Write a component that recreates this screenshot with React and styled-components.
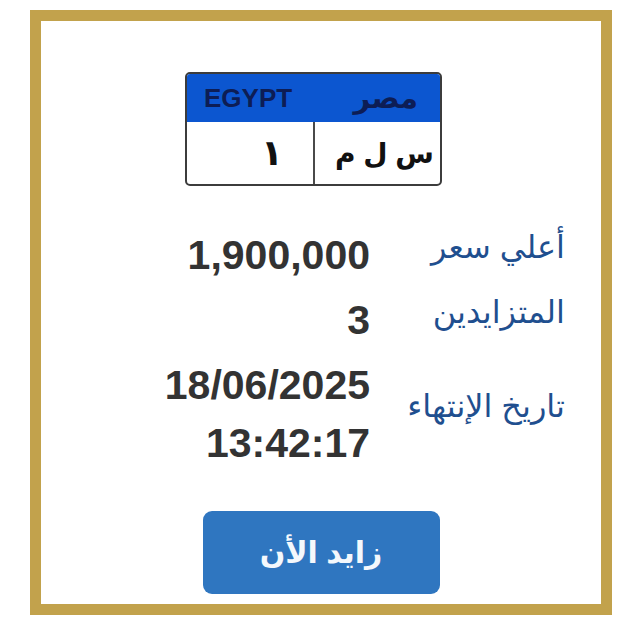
import React from 'react'
import styled, { createGlobalStyle } from 'styled-components'

const GlobalStyle = createGlobalStyle`
  body {
    margin: 0;
    background: #fff;
    font-family: "Liberation Sans", "DejaVu Sans", sans-serif;
  }
`;

const Frame = styled.div`
  box-sizing: border-box;
  width: 582px;
  height: 605px;
  margin: 10px 0 0 30px;
  border: 11px solid #c2a24c;
  background: #fff;
  display: flex;
  flex-direction: column;
  align-items: center;
  padding-top: 51px;
`;

const Plate = styled.div`
  box-sizing: border-box;
  width: 257px;
  height: 114px;
  margin-right: 15px;
  border: 2px solid #3c3c3c;
  border-radius: 5px;
  overflow: hidden;
  display: flex;
  flex-direction: column;
`;

const PlateHead = styled.div`
  flex-shrink: 0;
  height: 48px;
  background: #0c56d0;
  display: flex;
  align-items: center;
  justify-content: space-between;
  padding: 0 22px 0 17px;
  color: #0d1d55;
  font-weight: bold;
`;

const HeadText = styled.span`
  font-size: ${p => p.$size}px;
  line-height: 1;
`;

const PlateBody = styled.div`
  flex: 1;
  min-height: 0;
  display: grid;
  grid-template-columns: 125px 1fr;
  direction: rtl;
`;

const PlateCell = styled.div`
  box-sizing: border-box;
  display: flex;
  align-items: center;
  padding-right: ${p => p.$pad}px;
  font-size: ${p => p.$size}px;
  font-weight: bold;
  color: #111;
  white-space: nowrap;
  & + & {
    border-right: 2px solid #4a4a4a;
  }
`;

const Details = styled.div`
  align-self: stretch;
  direction: rtl;
  display: grid;
  grid-template-columns: 185px 1fr;
  column-gap: 10px;
  row-gap: 7px;
  padding-right: 36px;
  margin-top: 40px;
`;

const Label = styled.div`
  display: flex;
  align-items: center;
  color: #1f4f8f;
  font-size: 32px;
  margin-top: -16px;
`;

const Value = styled.div`
  direction: ltr;
  text-align: right;
  font-size: 41px;
  font-weight: bold;
  line-height: 58px;
  color: #333;
`;

const BidButton = styled.button`
  width: 237px;
  height: 83px;
  margin-top: 39px;
  border: none;
  border-radius: 9px;
  background: #2f76c0;
  color: #f4f8fc;
  font-family: "Liberation Sans", "DejaVu Sans", sans-serif;
  font-size: 30px;
  font-weight: bold;
  cursor: pointer;
`;

const rows = [
  { label: 'أعلي سعر', value: ['1,900,000'] },
  { label: 'المتزايدين', value: ['3'] },
  { label: 'تاريخ الإنتهاء', value: ['18/06/2025', '13:42:17'] },
]

const App = () => {
  return (
    <>
      <GlobalStyle />
      <Frame>
        <Plate>
          <PlateHead>
            <HeadText $size={26}>EGYPT</HeadText>
            <HeadText $size={29}>مصر</HeadText>
          </PlateHead>
          <PlateBody>
            <PlateCell $pad={6} $size={28}>س ل م</PlateCell>
            <PlateCell $pad={30} $size={36}>١</PlateCell>
          </PlateBody>
        </Plate>
        <Details>
          {rows.map((row) => (
            <React.Fragment key={row.label}>
              <Label>{row.label}</Label>
              <Value>
                {row.value.map((line) => (
                  <div key={line}>{line}</div>
                ))}
              </Value>
            </React.Fragment>
          ))}
        </Details>
        <BidButton>زايد الأن</BidButton>
      </Frame>
    </>
  )
}

export default App
